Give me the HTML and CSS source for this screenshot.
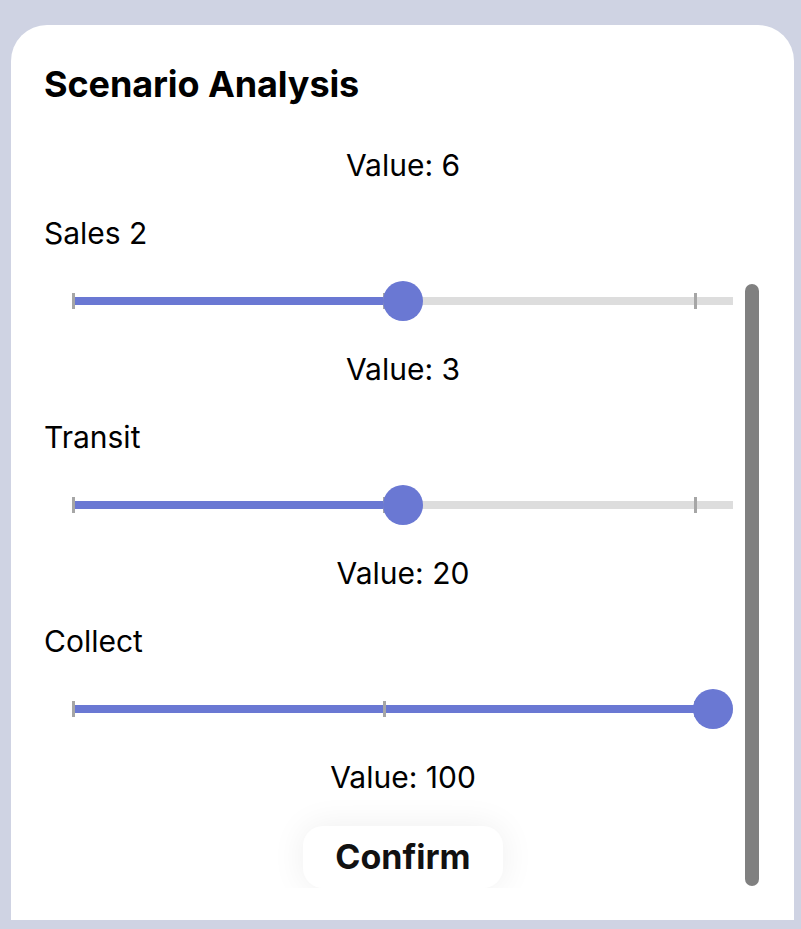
FILE: index.html
```html
<!DOCTYPE html>
<html lang="en">
<head>
<meta charset="utf-8">
<title>Scenario Analysis</title>
<link rel="stylesheet" href="styles.css">
</head>
<body>
<div class="card">
  <h1 class="title">Scenario Analysis</h1>
  <div class="scroll">
    <div class="content">
      <div class="value">Value: 6</div>

      <div class="label">Sales 2</div>
      <div class="slider">
        <div class="track">
          <div class="fill" style="width:330px"></div>
          <span class="tick" style="left:-1px"></span>
          <span class="tick" style="left:310px"></span>
          <span class="tick" style="left:621px"></span>
          <span class="thumb" style="left:330px"></span>
        </div>
      </div>
      <div class="value">Value: 3</div>

      <div class="label">Transit</div>
      <div class="slider">
        <div class="track">
          <div class="fill" style="width:330px"></div>
          <span class="tick" style="left:-1px"></span>
          <span class="tick" style="left:310px"></span>
          <span class="tick" style="left:621px"></span>
          <span class="thumb" style="left:330px"></span>
        </div>
      </div>
      <div class="value">Value: 20</div>

      <div class="label">Collect</div>
      <div class="slider">
        <div class="track">
          <div class="fill" style="width:640px"></div>
          <span class="tick" style="left:-1px"></span>
          <span class="tick" style="left:310px"></span>
          <span class="tick" style="left:621px"></span>
          <span class="thumb" style="left:640px"></span>
        </div>
      </div>
      <div class="value">Value: 100</div>

      <div class="actions">
        <button class="confirm" type="button">Confirm</button>
      </div>
    </div>
    <div class="scrollbar"></div>
  </div>
</div>
</body>
</html>
```

FILE: styles.css
```css
html, body {
  margin: 0;
  padding: 0;
}

body {
  background: #cfd3e3;
  font-family: "Inter", "Noto Sans", "Liberation Sans", sans-serif;
  color: #000;
  height: 929px;
  overflow: hidden;
}

.card {
  margin: 25px 7px 9px 11px;
  width: 783px;
  height: 895px;
  box-sizing: border-box;
  background: #ffffff;
  border-radius: 36px 36px 0 0;
  padding: 35px 32px 32px 33px;
  display: flex;
  flex-direction: column;
}

.title {
  margin: 0 0 23px 0;
  height: 48px;
  line-height: 48px;
  font-size: 36px;
  font-weight: 700;
  letter-spacing: -0.1px;
}

.scroll {
  position: relative;
  height: 757px;
  overflow: hidden;
}

.content {
  display: flex;
  flex-direction: column;
}

.value {
  height: 68px;
  line-height: 68px;
  font-size: 30px;
  text-align: center;
}

.label {
  height: 68px;
  line-height: 68px;
  font-size: 30px;
}

.slider {
  height: 68px;
  padding: 0 29px;
  display: flex;
  align-items: center;
}

.track {
  position: relative;
  width: 100%;
  height: 8px;
  background: #dddddd;
}

.fill {
  height: 100%;
  background: #6a78d3;
}

.tick {
  position: absolute;
  top: -4px;
  width: 3px;
  height: 16px;
  background: #a6a6a6;
}

.thumb {
  position: absolute;
  top: -16px;
  width: 40px;
  height: 40px;
  margin-left: -20px;
  border-radius: 50%;
  background: #6a78d3;
}

.actions {
  display: flex;
  justify-content: center;
  padding-top: 15px;
}

.confirm {
  width: 200px;
  height: 62px;
  border: none;
  border-radius: 20px;
  background: #ffffff;
  box-shadow: 0 0 34px rgba(0, 0, 0, 0.07);
  font-family: "Inter", "Noto Sans", "Liberation Sans", sans-serif;
  font-size: 34px;
  font-weight: 700;
  color: #111111;
  padding: 0;
  line-height: 62px;
}

.scrollbar {
  position: absolute;
  top: 153px;
  right: 3px;
  width: 14px;
  height: 602px;
  border-radius: 7px;
  background: #808080;
}
```
